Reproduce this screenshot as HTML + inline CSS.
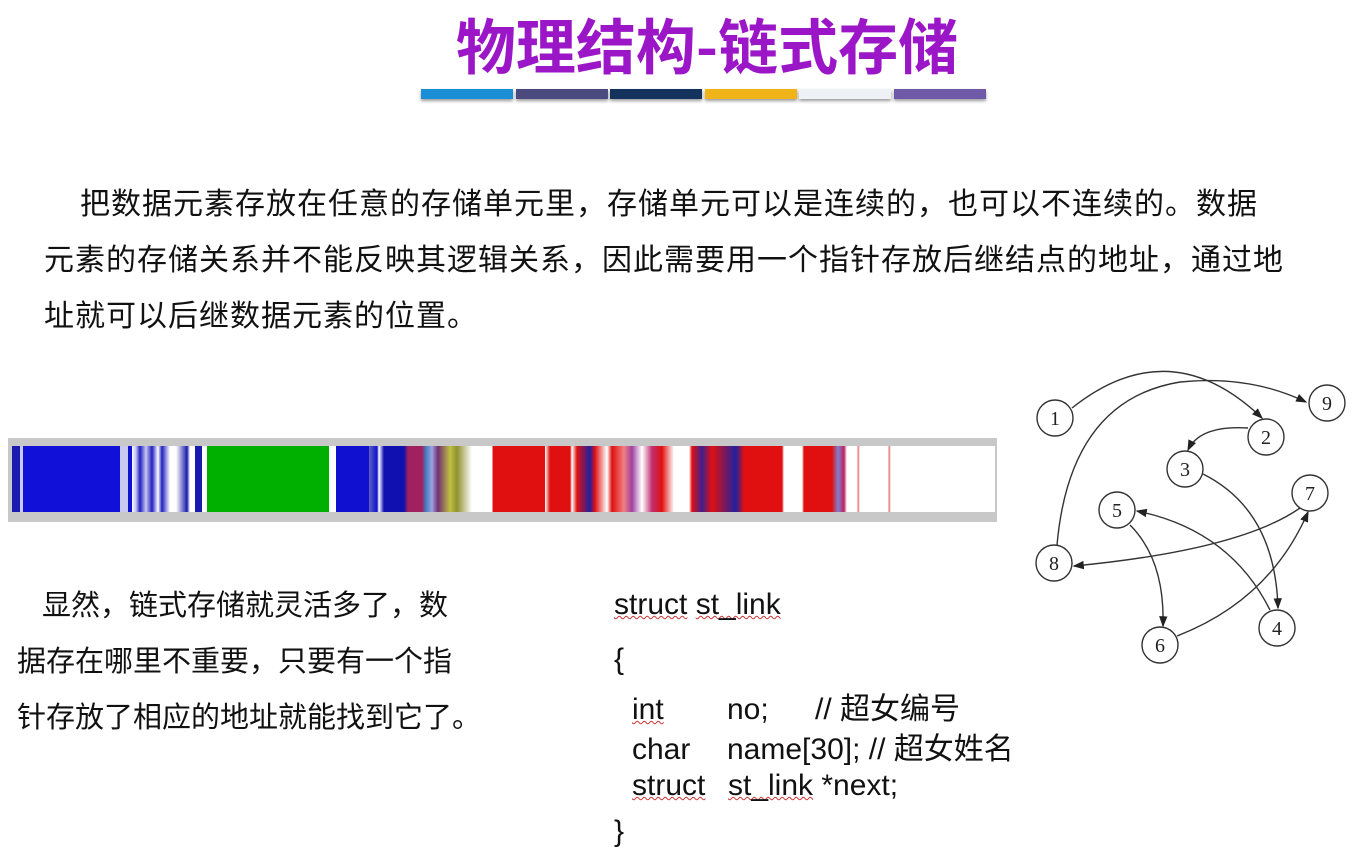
<!DOCTYPE html>
<html><head><meta charset="utf-8"><style>
body{margin:0;width:1367px;height:863px;background:#fff;position:relative;overflow:hidden;font-family:"Liberation Sans","Noto Sans CJK SC",sans-serif;color:#111}
.t{position:absolute;white-space:nowrap}
h1{position:absolute;left:0;width:1414px;top:0px;margin:0;text-align:center;font-size:60px;color:#9b16c7;font-weight:bold;font-family:"Noto Sans CJK SC",sans-serif}
.ub{position:absolute;top:89px;height:10px;width:92px;box-shadow:0 2px 3px #999}
.para{position:absolute;font-size:30px;line-height:56px;white-space:nowrap;letter-spacing:1px}
.code{position:absolute;font-size:30px;line-height:36px}
.sq{text-decoration:underline wavy #c33;text-decoration-thickness:1px}
</style></head><body>
<h1>物理结构-链式存储</h1>
<div class="ub" style="left:421px;background:#1a8fd6"></div>
<div class="ub" style="left:516px;background:#4b4a7e"></div>
<div class="ub" style="left:610px;background:#14325e"></div>
<div class="ub" style="left:705px;background:#f0b418"></div>
<div class="ub" style="left:799px;background:#eef2f6"></div>
<div class="ub" style="left:894px;background:#6e5aa8"></div>

<div class="para" style="left:44px;top:177px"><span style="padding-left:36px">把数据元素存放在任意的存储单元里，存储单元可以是连续的，也可以不连续的。数据</span><br>元素的存储关系并不能反映其逻辑关系，因此需要用一个指针存放后继结点的地址，通过地<br>址就可以后继数据元素的位置。</div>

<div style="position:absolute;left:8px;top:438px;width:989px;height:84px;background:#c8c8c8"></div>
<div style="position:absolute;left:12px;top:446px;width:983px;height:66px;background:linear-gradient(90deg,#1a1ab0 0,#1a1ab0 8px,#c8c8f0 8px,#c8c8f0 11px,#1010d8 11px,#1010d8 108px,#c8c8f0 108px,#c8c8f0 116px,#1010d0 116px,#1010d0 120px,#fff 120px,#c0c0f0 124px,#2020c0 128px,#c8c8f0 134px,#2020c0 140px,#fff 146px,#2020c0 150px,#fff 158px,#fff 164px,#b0b0e0 168px,#1a1ab0 175px,#fff 178px,#fff 183px,#1a1ab0 183px,#1a1ab0 190px,#fff 190px,#fff 195px,#00b000 195px,#00b000 317px,#fff 317px,#fff 324px,#1010d0 324px,#1010d0 357px,#6060c0 357px,#1010d0 365px,#fff 367px,#1010b0 372px,#1010b0 392px,#a02060 396px,#a02060 410px,#4080c0 414px,#a0a0e0 420px,#703070 426px,#c0c040 438px,#909030 445px,#fff 460px,#fff 480px,#e01010 481px,#e01010 533px,#fff 533px,#e01010 538px,#e01010 558px,#fff 560px,#e01010 565px,#2020a0 578px,#e01010 583px,#fff 595px,#e01010 600px,#f08080 612px,#a040a0 620px,#fff 630px,#c03070 640px,#e01010 650px,#fff 662px,#fff 677px,#e01010 680px,#402090 690px,#e01010 700px,#2020a0 724px,#e01010 732px,#e01010 770px,#fff 772px,#fff 790px,#e01010 792px,#e01010 820px,#8080d0 826px,#c02060 832px,#fff 835px,#fff 845px,#e07070 846px,#fff 848px,#fff 876px,#e07070 877px,#fff 879px,#fff 983px)"></div>

<div class="para" style="left:17px;top:578px;font-size:29px;letter-spacing:0"><span style="padding-left:25px">显然，链式存储就灵活多了，数</span><br>据存在哪里不重要，只要有一个指<br>针存放了相应的地址就能找到它了。</div>

<div class="code t" style="left:614px;top:587px"><span class="sq">struct</span> <span class="sq">st_link</span></div>
<div class="code t" style="left:614px;top:642px">{</div>
<div class="code t" style="left:632px;top:692px"><span class="sq">int</span></div>
<div class="code t" style="left:727px;top:692px">no;</div>
<div class="code t" style="left:815px;top:692px">// 超女编号</div>
<div class="code t" style="left:632px;top:732px">char</div>
<div class="code t" style="left:727px;top:732px">name[30]; // 超女姓名</div>
<div class="code t" style="left:632px;top:768px"><span class="sq">struct</span></div>
<div class="code t" style="left:728px;top:768px"><span class="sq">st_link</span> *next;</div>
<div class="code t" style="left:614px;top:814px">}</div>

<svg style="position:absolute;left:0;top:0" width="1367" height="863" viewBox="0 0 1367 863">
<defs><marker id="a" markerWidth="8" markerHeight="8" refX="7" refY="4" orient="auto"><path d="M0,1 L8,4 L0,7z" fill="#222"/></marker></defs>
<g fill="none" stroke="#333" stroke-width="1.4">
<path d="M1072,408 Q1170,330 1262,418" marker-end="url(#a)"/>
<path d="M1057,545 Q1070,400 1180,382 Q1250,375 1306,402" marker-end="url(#a)"/>
<path d="M1248,428 Q1200,425 1188,450" marker-end="url(#a)"/>
<path d="M1203,474 Q1275,510 1278,608" marker-end="url(#a)"/>
<path d="M1300,508 Q1240,550 1074,566" marker-end="url(#a)"/>
<path d="M1270,610 Q1230,530 1137,511" marker-end="url(#a)"/>
<path d="M1130,525 Q1165,560 1163,626" marker-end="url(#a)"/>
<path d="M1177,636 Q1270,600 1308,512" marker-end="url(#a)"/>
</g>
<g fill="#fff" stroke="#333" stroke-width="1.4">
<circle cx="1055" cy="418" r="18"/><circle cx="1327" cy="403" r="18"/><circle cx="1266" cy="437" r="18"/>
<circle cx="1185" cy="469" r="18"/><circle cx="1310" cy="493" r="18"/><circle cx="1117" cy="510" r="18"/>
<circle cx="1054" cy="563" r="18"/><circle cx="1277" cy="628" r="18"/><circle cx="1160" cy="645" r="18"/>
</g>
<g font-family="Liberation Serif" font-size="20" text-anchor="middle" fill="#222">
<text x="1055" y="425">1</text><text x="1327" y="410">9</text><text x="1266" y="444">2</text>
<text x="1185" y="476">3</text><text x="1310" y="500">7</text><text x="1117" y="517">5</text>
<text x="1054" y="570">8</text><text x="1277" y="635">4</text><text x="1160" y="652">6</text>
</g>
</svg>
</body></html>
